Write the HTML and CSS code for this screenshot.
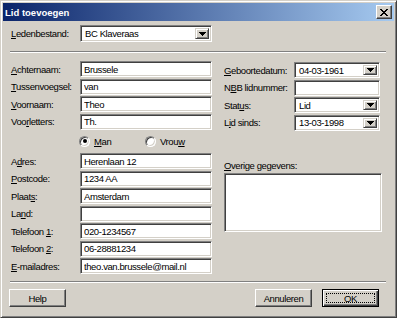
FILE: index.html
```html
<!DOCTYPE html>
<html lang="nl">
<head>
  <meta charset="UTF-8">
  <meta name="viewport" content="width=device-width, initial-scale=1.0">
  <title>Lid toevoegen</title>
  <link rel="stylesheet" href="styles.css">
</head>
<body>

  <div class="window">
    <div class="titlebar">
      <span class="title">Lid toevoegen</span>
      <span class="close">
        <svg width="8" height="7" viewBox="0 0 8 7" shape-rendering="crispEdges">
          <path d="M0 0h2v1h-2zM6 0h2v1h-2zM1 1h2v1h-2zM5 1h2v1h-2zM2 2h4v1h-4zM3 3h2v1h-2zM2 4h4v1h-4zM1 5h2v1h-2zM5 5h2v1h-2zM0 6h2v1h-2zM6 6h2v1h-2z" fill="#000"/>
        </svg>
      </span>
    </div>

    <div class="content">
      <!-- Ledenbestand -->
      <div class="field top-field">
        <label class="lbl"><u>L</u>edenbestand:</label>
        <div class="combo combo-wide">
          <span class="combo-value">BC Klaveraas</span>
          <span class="combo-btn"><svg width="7" height="4" viewBox="0 0 7 4" shape-rendering="crispEdges"><path d="M0 0h7v1h-7zM1 1h5v1h-5zM2 2h3v1h-3zM3 3h1v1h-1z" fill="#000"/></svg></span>
        </div>
      </div>

      <div class="sep"></div>

      <div class="columns">
        <!-- linker kolom -->
        <div class="col col-left">
          <div class="field"><label class="lbl"><u>A</u>chternaam:</label><input class="edit" type="text" value="Brussele"></div>
          <div class="field"><label class="lbl"><u>T</u>ussenvoegsel:</label><input class="edit" type="text" value="van"></div>
          <div class="field"><label class="lbl"><u>V</u>oornaam:</label><input class="edit" type="text" value="Theo"></div>
          <div class="field"><label class="lbl">Voo<u>r</u>letters:</label><input class="edit" type="text" value="Th."></div>

          <div class="radios">
            <span class="radio"><span class="radio-dot checked"></span><span><u>M</u>an</span></span>
            <span class="radio"><span class="radio-dot"></span><span>Vrou<u>w</u></span></span>
          </div>

          <div class="field"><label class="lbl">A<u>d</u>res:</label><input class="edit" type="text" value="Herenlaan 12"></div>
          <div class="field"><label class="lbl"><u>P</u>ostcode:</label><input class="edit" type="text" value="1234 AA"></div>
          <div class="field"><label class="lbl">Plaat<u>s</u>:</label><input class="edit" type="text" value="Amsterdam"></div>
          <div class="field"><label class="lbl">La<u>n</u>d:</label><input class="edit" type="text" value=""></div>
          <div class="field"><label class="lbl">Telefoon <u>1</u>:</label><input class="edit" type="text" value="020-1234567"></div>
          <div class="field"><label class="lbl">Telefoon <u>2</u>:</label><input class="edit" type="text" value="06-28881234"></div>
          <div class="field"><label class="lbl"><u>E</u>-mailadres:</label><input class="edit" type="text" value="theo.van.brussele@mail.nl"></div>
        </div>

        <!-- rechter kolom -->
        <div class="col col-right">
          <div class="field">
            <label class="lbl lbl-right"><u>G</u>eboortedatum:</label>
            <div class="combo combo-small">
              <span class="combo-value">04-03-1961</span>
              <span class="combo-btn"><svg width="7" height="4" viewBox="0 0 7 4" shape-rendering="crispEdges"><path d="M0 0h7v1h-7zM1 1h5v1h-5zM2 2h3v1h-3zM3 3h1v1h-1z" fill="#000"/></svg></span>
            </div>
          </div>
          <div class="field">
            <label class="lbl lbl-right">N<u>B</u>B lidnummer:</label>
            <input class="edit edit-small" type="text" value="">
          </div>
          <div class="field">
            <label class="lbl lbl-right">Stat<u>u</u>s:</label>
            <div class="combo combo-small">
              <span class="combo-value">Lid</span>
              <span class="combo-btn"><svg width="7" height="4" viewBox="0 0 7 4" shape-rendering="crispEdges"><path d="M0 0h7v1h-7zM1 1h5v1h-5zM2 2h3v1h-3zM3 3h1v1h-1z" fill="#000"/></svg></span>
            </div>
          </div>
          <div class="field">
            <label class="lbl lbl-right">L<u>i</u>d sinds:</label>
            <div class="combo combo-small">
              <span class="combo-value">13-03-1998</span>
              <span class="combo-btn"><svg width="7" height="4" viewBox="0 0 7 4" shape-rendering="crispEdges"><path d="M0 0h7v1h-7zM1 1h5v1h-5zM2 2h3v1h-3zM3 3h1v1h-1z" fill="#000"/></svg></span>
            </div>
          </div>

          <div class="notes">
            <label class="notes-lbl"><u>O</u>verige gegevens:</label>
            <textarea class="memo"></textarea>
          </div>
        </div>
      </div>

      <div class="sep sep-bottom"></div>

      <div class="buttons">
        <button class="btn">Help</button>
        <span class="spacer"></span>
        <button class="btn">Annuleren</button>
        <button class="btn btn-default"><span class="focus">OK</span></button>
      </div>
    </div>
  </div>

</body>
</html>
```

FILE: styles.css
```css
body {
  margin: 0;
  background: #d4d0c8;
  font-family: "Liberation Sans", Arial, sans-serif;
  font-size: 9.5px;
  letter-spacing: -0.4px;
  color: #000;
}
.window {
  width: 397px;
  height: 318px;
  box-sizing: border-box;
  background: #d4d0c8;
  border: 1px solid;
  border-color: #d4d0c8 #404040 #404040 #d4d0c8;
  box-shadow: inset 1px 1px #fff, inset -1px -1px #808080;
  padding: 2px;
  display: flex;
  flex-direction: column;
}
.titlebar {
  height: 18px;
  background: linear-gradient(to right, #0a246a, #a6caf0);
  display: flex;
  align-items: center;
  padding: 0 2px 0 2px;
}
.title {
  flex: 1;
  color: #fff;
  font-weight: bold;
  letter-spacing: 0;
  font-size: 9.5px;
}
.close {
  width: 16px;
  height: 14px;
  box-sizing: border-box;
  background: #d4d0c8;
  border: 1px solid;
  border-color: #fff #404040 #404040 #fff;
  box-shadow: inset -1px -1px #808080, inset 1px 1px #d4d0c8;
  display: flex;
  align-items: center;
  justify-content: center;
}
.close svg {
  display: block;
}
.content {
  padding: 0 8px;
  display: flex;
  flex-direction: column;
}
.field {
  display: flex;
  align-items: center;
  height: 16px;
}
.top-field {
  margin-top: 4px;
  height: 17px;
}
.lbl {
  width: 69px;
  flex: none;
}
.lbl-right {
  width: 70px;
}
u {
  text-decoration: underline;
  text-underline-offset: 1px;
}
.edit,
.combo,
.memo {
  box-sizing: border-box;
  background: #fff;
  border: 1px solid;
  border-color: #808080 #fff #fff #808080;
  box-shadow: inset 1px 1px #404040, inset -1px -1px #d4d0c8;
  font: inherit;
  letter-spacing: inherit;
  color: #000;
  margin: 0;
  outline: none;
}
.edit {
  width: 132px;
  height: 16px;
  padding: 0 3px;
}
.edit-small {
  width: 86px;
}
.combo {
  width: 132px;
  height: 17px;
  display: flex;
  align-items: center;
  padding: 2px;
}
.combo-small {
  width: 86px;
  height: 16px;
}
.combo-value {
  flex: 1;
  padding-left: 2px;
}
.combo-btn {
  width: 14px;
  height: 100%;
  box-sizing: border-box;
  background: #d4d0c8;
  border: 1px solid;
  border-color: #d4d0c8 #404040 #404040 #d4d0c8;
  box-shadow: inset 1px 1px #fff, inset -1px -1px #808080;
  display: flex;
  align-items: center;
  justify-content: center;
}
.combo-btn svg {
  display: block;
}
.sep {
  height: 0;
  border-top: 1px solid #808080;
  border-bottom: 1px solid #fff;
  margin: 9px 0 0 -1px;
}
.sep-bottom {
  margin-top: 7px;
}
.columns {
  display: flex;
  gap: 12px;
  margin-top: 8px;
}
.col {
  display: flex;
  flex-direction: column;
  gap: 1.5px;
}
.col-left {
  width: 201px;
}
.col-right {
  width: 158px;
  padding-top: 1px;
}
.radios {
  height: 20.5px;
  display: flex;
  align-items: center;
  padding-left: 68px;
}
.radio {
  width: 66px;
  display: flex;
  align-items: center;
  gap: 4px;
}
.radio-dot {
  width: 11px;
  height: 11px;
  box-sizing: border-box;
  border-radius: 50%;
  background: #fff;
  border: 1px solid;
  border-color: #808080 #fff #fff #808080;
  box-shadow: inset 1px 1px #404040, inset -1px -1px #d4d0c8;
  display: flex;
  align-items: center;
  justify-content: center;
}
.radio-dot.checked::after {
  content: "";
  width: 4px;
  height: 4px;
  border-radius: 50%;
  background: #000;
}
.notes {
  margin-top: 27.5px;
  display: flex;
  flex-direction: column;
}
.notes-lbl {
  line-height: 11px;
  height: 11px;
}
.memo {
  margin-top: 2px;
  width: 158px;
  height: 59px;
  resize: none;
  padding: 2px;
}
.buttons {
  display: flex;
  margin: 6px 7px 0 -2px;
  gap: 10px;
}
.spacer {
  flex: 1;
}
.btn {
  width: 57px;
  height: 18px;
  box-sizing: border-box;
  background: #d4d0c8;
  border: 1px solid;
  border-color: #fff #404040 #404040 #fff;
  box-shadow: inset -1px -1px #808080, inset 1px 1px #d4d0c8;
  font: inherit;
  letter-spacing: inherit;
  color: #000;
  padding: 0;
  margin: 0;
}
.btn-default {
  border: 1px solid #000;
  box-shadow: inset 1px 1px #fff, inset -1px -1px #404040, inset -2px -2px #808080;
  padding: 3px;
  display: flex;
}
.focus {
  flex: 1;
  border: 1px dotted #000;
  display: flex;
  align-items: center;
  justify-content: center;
}
```
